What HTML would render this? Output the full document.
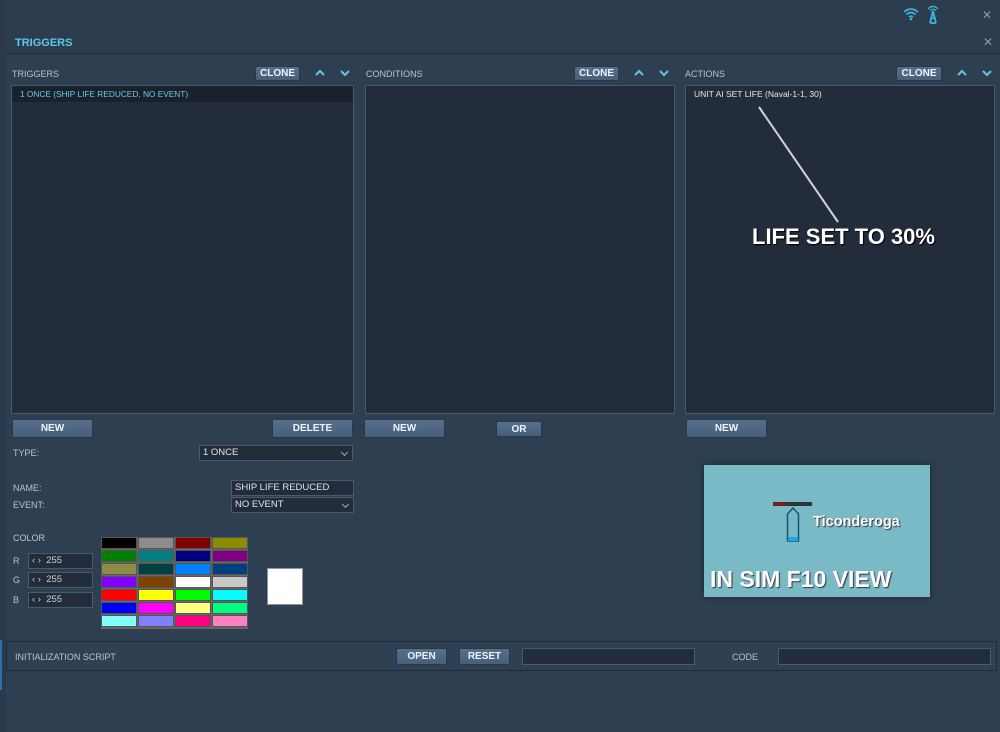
<!DOCTYPE html>
<html><head><meta charset="utf-8"><style>
*{margin:0;padding:0;box-sizing:border-box}
body{width:1000px;height:732px;background:#2d3d50;font-family:"Liberation Sans","DejaVu Sans",sans-serif;color:#c3ccd6;position:relative;overflow:hidden;font-size:10px}
.a{position:absolute}
.lbl{font-size:9px;color:#b9c3cd;line-height:12px}
.list{background:#222c3a;border:1px solid #475a6e}
.btn{background:linear-gradient(#56708c,#46607c);border:1px solid #2a3848;border-radius:2px;color:#eef3f8;font-weight:bold;font-size:10px;text-align:center;display:flex;align-items:center;justify-content:center}
.inp{background:#222c3a;border:1px solid #475a6e;font-size:9.5px;color:#dfe5ec;line-height:14px;padding-left:3px}
.dd::after{content:"";position:absolute;right:5px;top:4px;width:4px;height:4px;border-right:1px solid #aab;border-bottom:1px solid #aab;transform:rotate(45deg)}
.pal div{position:absolute;width:36px;height:12px;border:1px solid #555}
</style></head><body>
<div class="a" style="left:0;top:0;width:6px;height:732px;background:#2a394b"></div>
<div class="a" style="left:6px;top:55px;width:994px;height:677px;background:#2e3f52"></div>
<div class="a" style="left:6px;top:53px;width:994px;height:1px;background:#22303e"></div>
<div class="a" style="left:15px;top:37px;font-weight:bold;font-size:11px;color:#5fc8e8">TRIGGERS</div>
<svg class="a" style="left:902px;top:7px" width="18" height="14" viewBox="0 0 18 14"><path d="M2 5Q9-1 16 5M4.5 7.5Q9 3.5 13.5 7.5M7 10Q9 8.5 11 10" stroke="#3ab6e0" stroke-width="1.6" fill="none"/><circle cx="9" cy="12" r="1.3" fill="#3ab6e0"/></svg>
<svg class="a" style="left:925px;top:5px" width="16" height="19" viewBox="0 0 16 19"><path d="M3 4Q8-1 13 4M5 5.5Q8 3 11 5.5" stroke="#3ab6e0" stroke-width="1.3" fill="none"/><path d="M8 6L5 18M8 6L11 18M6 13H10M5 18H11" stroke="#3ab6e0" stroke-width="1.8" fill="none"/></svg>
<div class="a" style="left:982px;top:8px;font-size:12px;color:#8a97a6">✕</div>
<div class="a" style="left:983px;top:35px;font-size:12px;color:#8a97a6">✕</div>
<div class="a lbl" style="left:12px;top:68px">TRIGGERS</div>
<div class="a lbl" style="left:366px;top:68px">CONDITIONS</div>
<div class="a lbl" style="left:685px;top:68px">ACTIONS</div>
<div class="a btn" style="left:255px;top:66px;width:45px;height:15px">CLONE</div>
<div class="a btn" style="left:574px;top:66px;width:45px;height:15px">CLONE</div>
<div class="a btn" style="left:896px;top:66px;width:46px;height:15px">CLONE</div>
<svg class="a" style="left:313px;top:68px" width="40" height="10"><path d="M3 7L7 3L11 7M28 3L32 7L36 3" stroke="#5fc8e8" stroke-width="2" fill="none"/></svg>
<svg class="a" style="left:632px;top:68px" width="40" height="10"><path d="M3 7L7 3L11 7M28 3L32 7L36 3" stroke="#5fc8e8" stroke-width="2" fill="none"/></svg>
<svg class="a" style="left:955px;top:68px" width="40" height="10"><path d="M3 7L7 3L11 7M28 3L32 7L36 3" stroke="#5fc8e8" stroke-width="2" fill="none"/></svg>
<div class="a list" style="left:11px;top:85px;width:343px;height:329px"></div>
<div class="a" style="left:12px;top:86px;width:341px;height:16px;background:#19212b"></div>
<div class="a" style="left:20px;top:89px;font-size:8.3px;color:#6cc9e6">1 ONCE (SHIP LIFE REDUCED, NO EVENT)</div>
<div class="a list" style="left:365px;top:85px;width:310px;height:329px"></div>
<div class="a list" style="left:685px;top:85px;width:310px;height:329px"></div>
<div class="a" style="left:694px;top:89px;font-size:8.5px;color:#e3e8ee">UNIT AI SET LIFE (Naval-1-1, 30)</div>
<svg class="a" style="left:750px;top:100px" width="100" height="130"><line x1="9" y1="7" x2="88" y2="122" stroke="#d0d4d8" stroke-width="2"/></svg>
<div class="a" style="left:752px;top:224px;font-size:22px;font-weight:bold;color:#fff;text-shadow:1px 1px 1px #000">LIFE SET TO 30%</div>
<div class="a btn" style="left:12px;top:419px;width:81px;height:19px">NEW</div>
<div class="a btn" style="left:272px;top:419px;width:81px;height:19px">DELETE</div>
<div class="a btn" style="left:364px;top:419px;width:81px;height:19px">NEW</div>
<div class="a btn" style="left:496px;top:421px;width:46px;height:16px">OR</div>
<div class="a btn" style="left:686px;top:419px;width:81px;height:19px">NEW</div>
<div class="a lbl" style="left:13px;top:447px">TYPE:</div>
<div class="a inp dd" style="left:199px;top:445px;width:154px;height:16px">1 ONCE</div>
<div class="a lbl" style="left:13px;top:482px">NAME:</div>
<div class="a inp" style="left:231px;top:480px;width:123px;height:16px">SHIP LIFE REDUCED</div>
<div class="a lbl" style="left:13px;top:499px">EVENT:</div>
<div class="a inp dd" style="left:231px;top:497px;width:123px;height:16px">NO EVENT</div>
<div class="a lbl" style="left:13px;top:532px">COLOR</div>
<div class="a lbl" style="left:13px;top:555px">R</div>
<div class="a lbl" style="left:13px;top:574px">G</div>
<div class="a lbl" style="left:13px;top:594px">B</div>
<div class="a inp" style="left:28px;top:553px;width:65px;height:16px;color:#c9d0d8">&lsaquo; &rsaquo; &nbsp;255</div>
<div class="a inp" style="left:28px;top:572px;width:65px;height:16px;color:#c9d0d8">&lsaquo; &rsaquo; &nbsp;255</div>
<div class="a inp" style="left:28px;top:592px;width:65px;height:16px;color:#c9d0d8">&lsaquo; &rsaquo; &nbsp;255</div>
<div class="a pal" style="left:101px;top:537px;width:147px;height:92px;background:#666">
<div style="left:0;top:0;background:#000"></div><div style="left:37px;top:0;background:#8c8c8c"></div><div style="left:74px;top:0;background:#800000"></div><div style="left:111px;top:0;background:#8c8c00"></div>
<div style="left:0;top:13px;background:#008000"></div><div style="left:37px;top:13px;background:#008080"></div><div style="left:74px;top:13px;background:#000080"></div><div style="left:111px;top:13px;background:#800080"></div>
<div style="left:0;top:26px;background:#8c8c46"></div><div style="left:37px;top:26px;background:#004040"></div><div style="left:74px;top:26px;background:#0080ff"></div><div style="left:111px;top:26px;background:#004080"></div>
<div style="left:0;top:39px;background:#8000ff"></div><div style="left:37px;top:39px;background:#804000"></div><div style="left:74px;top:39px;background:#fff"></div><div style="left:111px;top:39px;background:#c8c8c8"></div>
<div style="left:0;top:52px;background:#ff0000"></div><div style="left:37px;top:52px;background:#ffff00"></div><div style="left:74px;top:52px;background:#00ff00"></div><div style="left:111px;top:52px;background:#00ffff"></div>
<div style="left:0;top:65px;background:#0000ff"></div><div style="left:37px;top:65px;background:#ff00ff"></div><div style="left:74px;top:65px;background:#ffff80"></div><div style="left:111px;top:65px;background:#00ff80"></div>
<div style="left:0;top:78px;background:#80ffff"></div><div style="left:37px;top:78px;background:#8080ff"></div><div style="left:74px;top:78px;background:#ff0080"></div><div style="left:111px;top:78px;background:#ff80c0"></div>
</div>
<div class="a" style="left:267px;top:568px;width:36px;height:37px;background:#fff;border:1px solid #8a96a3"></div>
<div class="a" style="left:704px;top:465px;width:226px;height:132px;background:#7ab9c6;box-shadow:0 0 6px #1a2530"></div>
<div class="a" style="left:773px;top:502px;width:39px;height:4px;background:#2b3438"></div>
<div class="a" style="left:774px;top:503px;width:11px;height:2px;background:#c00"></div>
<svg class="a" style="left:785px;top:506px" width="16" height="38"><path d="M2.5 8L8 2L13.5 8V35H2.5Z" stroke="#0b5a7e" stroke-width="1.5" fill="none"/><rect x="3" y="31" width="10" height="4" fill="#1aa6e0"/></svg>
<div class="a" style="left:813px;top:514px;font-size:14.5px;font-weight:bold;color:#fff;text-shadow:1px 1px 1px #333">Ticonderoga</div>
<div class="a" style="left:710px;top:566px;font-size:23px;font-weight:bold;color:#fff;text-shadow:1px 1px 1px #333">IN SIM F10 VIEW</div>
<div class="a" style="left:6px;top:641px;width:991px;height:30px;border:1px solid #1e2a37;background:#2f4053"></div>
<div class="a lbl" style="left:15px;top:651px">INITIALIZATION SCRIPT</div>
<div class="a btn" style="left:396px;top:648px;width:51px;height:17px">OPEN</div>
<div class="a btn" style="left:459px;top:648px;width:51px;height:17px">RESET</div>
<div class="a inp" style="left:522px;top:648px;width:173px;height:17px"></div>
<div class="a lbl" style="left:732px;top:651px">CODE</div>
<div class="a inp" style="left:778px;top:648px;width:213px;height:17px"></div>
<div class="a" style="left:0;top:640px;width:2px;height:50px;background:#2f6fa8"></div>
</body></html>
